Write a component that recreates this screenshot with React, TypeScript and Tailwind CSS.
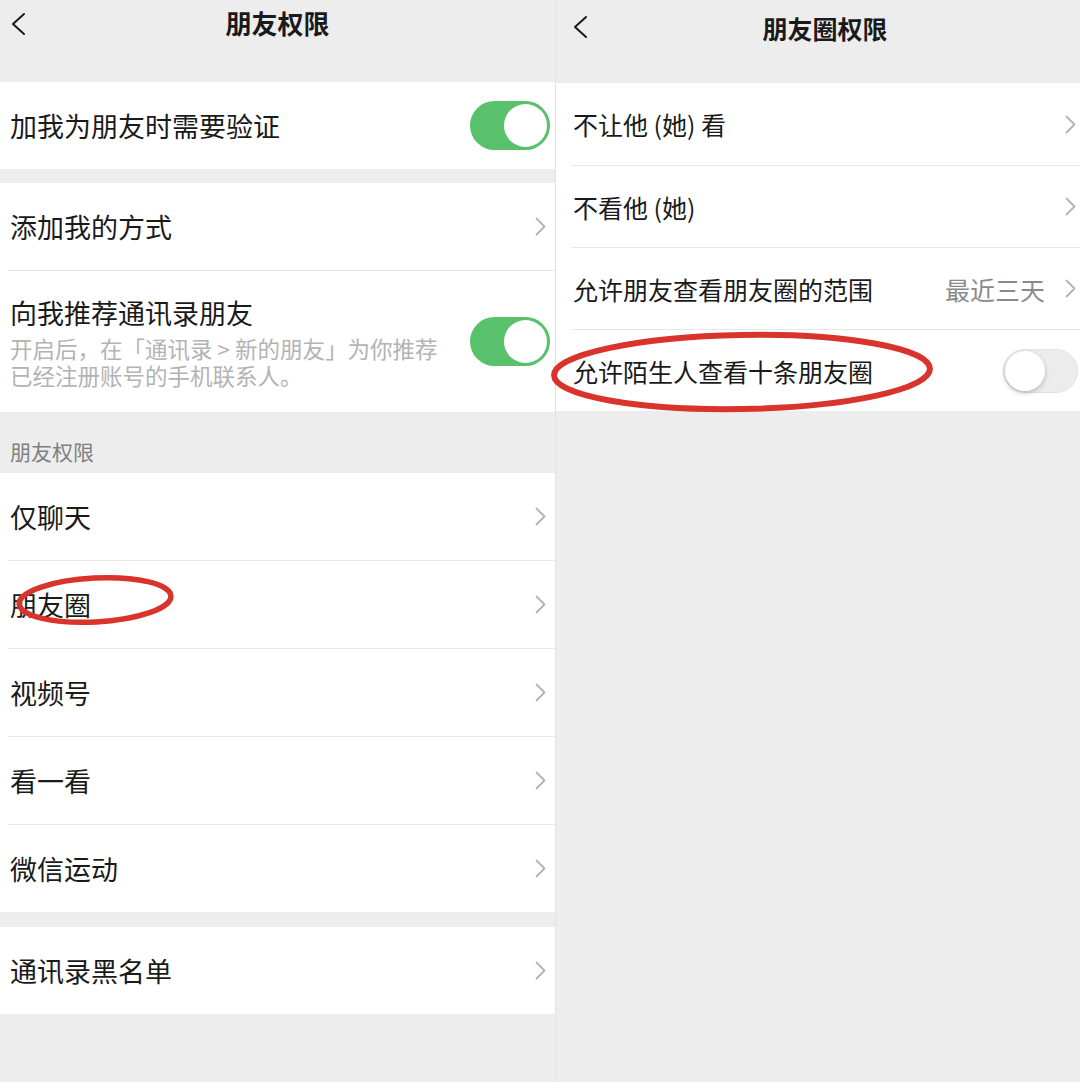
import React from 'react'

const FONT = { fontFamily: '"Noto Sans CJK SC", "Noto Sans", sans-serif' }

function Chevron({ className = '' }: { className?: string }) {
  return (
    <svg className={className} width="11" height="19" viewBox="0 0 11 19" fill="none">
      <path d="M1.5 1.5 L9.5 9.5 L1.5 17.5" stroke="#b3b3b3" strokeWidth="1.8" strokeLinecap="round" strokeLinejoin="round" />
    </svg>
  )
}

function BackArrow() {
  return (
    <svg width="16" height="24" viewBox="0 0 16 24" fill="none">
      <path d="M14 2 L3 12 L14 22" stroke="#1a1a1a" strokeWidth="2" strokeLinecap="round" strokeLinejoin="round" />
    </svg>
  )
}

function SwitchOn() {
  return (
    <div className="flex h-[49px] w-[80px] shrink-0 items-center justify-end rounded-full bg-[#59c16b] p-[3px]">
      <div className="h-[43px] w-[43px] rounded-full bg-white" />
    </div>
  )
}

function SwitchOff() {
  return (
    <div className="flex h-[44px] w-[75px] shrink-0 items-center justify-start rounded-full border border-[#e2e2e2] bg-[#ececec] p-[1px]">
      <div className="h-[40px] w-[40px] rounded-full bg-white shadow-[0_2px_5px_rgba(0,0,0,0.22)]" />
    </div>
  )
}

function LeftRow({ label, first, tall }: { label: string; first?: boolean; tall?: boolean }) {
  return (
    <div className={`ml-[8px] flex ${tall ? 'h-[88px]' : 'h-[87px]'} items-center justify-between pl-[2px] pr-[9px] ${first ? '' : 'border-t border-[#e8e8e8]'}`}>
      <span className="text-[27px] leading-[36px] text-[#1a1a1a]">{label}</span>
      <Chevron />
    </div>
  )
}

function RightRow({ label, value, first, toggle }: { label: string; value?: string; first?: boolean; toggle?: boolean }) {
  return (
    <div className={`ml-[16px] flex h-[82px] items-center justify-between pl-[1px] ${toggle ? 'pr-[2px]' : 'pr-[4px]'} ${first ? '' : 'border-t border-[#e8e8e8]'}`}>
      <span className="text-[25px] leading-[34px] text-[#1a1a1a]">{label}</span>
      {toggle ? (
        <SwitchOff />
      ) : (
        <div className="flex items-center gap-[20px]">
          {value && <span className="text-[25px] leading-[34px] text-[#8a8a8a]">{value}</span>}
          <Chevron />
        </div>
      )}
    </div>
  )
}

export default function App() {
  return (
    <div className="relative flex h-[1082px] w-[1080px] overflow-hidden bg-[#ededed]" style={FONT}>
      {/* left screen */}
      <div className="flex w-[556px] shrink-0 flex-col border-r border-[#e2e2e2]">
        <div className="grid h-[82px] grid-cols-[60px_1fr_60px] items-start">
          <div className="ml-[10px] mt-[12px]">
            <BackArrow />
          </div>
          <div className="pt-[7px] text-center text-[26px] font-bold leading-[32px] text-[#1a1a1a]">朋友权限</div>
          <div />
        </div>

        <div className="flex h-[87px] items-center justify-between bg-white pl-[10px] pr-[5px]">
          <span className="text-[27px] leading-[36px] text-[#1a1a1a]">加我为朋友时需要验证</span>
          <SwitchOn />
        </div>

        <div className="mt-[14px] bg-white">
          <LeftRow label="添加我的方式" first />
          <div className="ml-[8px] flex h-[142px] items-center justify-between border-t border-[#e8e8e8] pl-[2px] pr-[5px]">
            <div className="flex flex-col">
              <span className="text-[27px] leading-[36px] text-[#1a1a1a]">向我推荐通讯录朋友</span>
              <div className="mt-[4px] text-[22.5px] leading-[27px] text-[#b3b3b3]">开启后，在「通讯录 &gt; 新的朋友」为你推荐</div>
              <div className="text-[22.5px] leading-[27px] text-[#b3b3b3]">已经注册账号的手机联系人。</div>
            </div>
            <SwitchOn />
          </div>
        </div>

        <div className="flex h-[61px] items-end pb-[9px] pl-[10px] text-[21px] leading-[26px] text-[#808080]">朋友权限</div>

        <div className="bg-white">
          <LeftRow label="仅聊天" first />
          <LeftRow label="朋友圈" tall />
          <LeftRow label="视频号" tall />
          <LeftRow label="看一看" tall />
          <LeftRow label="微信运动" tall />
        </div>

        <div className="mt-[15px] bg-white">
          <LeftRow label="通讯录黑名单" first />
        </div>
      </div>

      {/* right screen */}
      <div className="flex w-[524px] shrink-0 flex-col">
        <div className="grid h-[83px] grid-cols-[70px_1fr_56px] items-start">
          <div className="ml-[16px] mt-[15px]">
            <BackArrow />
          </div>
          <div className="pt-[12px] text-center text-[25px] font-bold leading-[32px] text-[#1a1a1a]">朋友圈权限</div>
          <div />
        </div>
        <div className="bg-white">
          <RightRow label="不让他 (她) 看" first />
          <RightRow label="不看他 (她)" />
          <RightRow label="允许朋友查看朋友圈的范围" value="最近三天" />
          <RightRow label="允许陌生人查看十条朋友圈" toggle />
        </div>
      </div>

      {/* hand-drawn annotations */}
      <svg className="pointer-events-none absolute inset-0" width="1080" height="1082" viewBox="0 0 1080 1082">
        <ellipse cx="95" cy="600" rx="76" ry="22" transform="rotate(-3 95 600)" fill="none" stroke="#d9342b" strokeWidth="5.5" />
        <ellipse cx="742" cy="372" rx="188" ry="37" transform="rotate(-1 742 372)" fill="none" stroke="#d9342b" strokeWidth="6" />
      </svg>
    </div>
  )
}
